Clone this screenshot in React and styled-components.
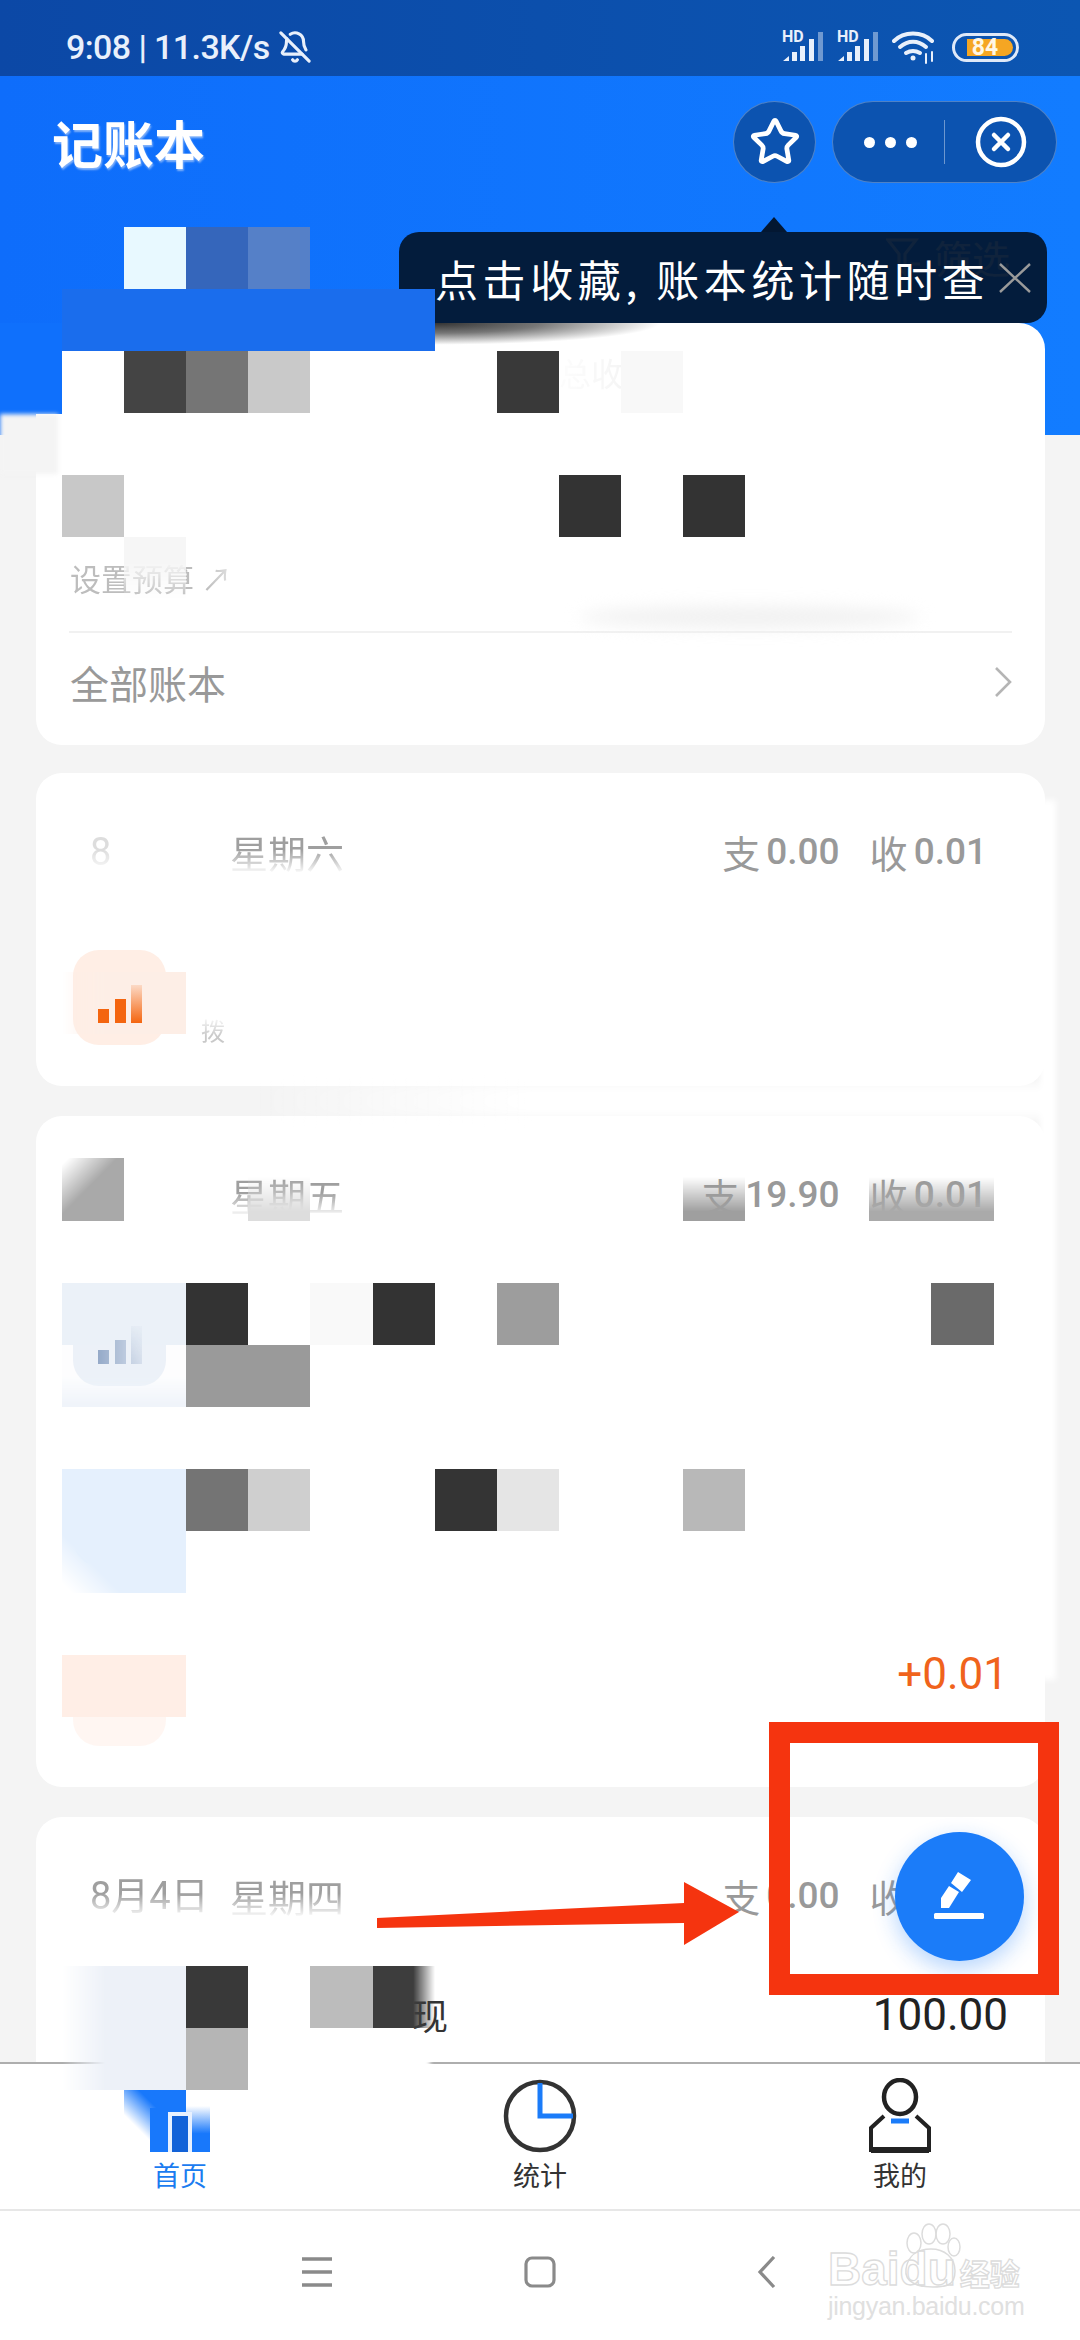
import React from "react";
import styled, { createGlobalStyle } from "styled-components";
import { Star, BellOff } from "lucide-react";

const CJK = `"Noto Sans CJK SC", "Noto Sans", sans-serif`;
const NUM = `Roboto, "Noto Sans CJK SC", sans-serif`;

const Global = createGlobalStyle`
  html, body { margin: 0; padding: 0; background: #f4f4f4; }
  * { box-sizing: border-box; }
`;

const Screen = styled.div`
  position: relative;
  width: 1080px;
  height: 2340px;
  overflow: hidden;
  display: flex;
  flex-direction: column;
  background: #f4f4f4;
  font-family: ${CJK};
`;

/* status bar */
const StatusBar = styled.div`
  height: 76px;
  flex: none;
  display: flex;
  align-items: center;
  justify-content: space-between;
  padding: 18px 61px 0 66px;
  background: linear-gradient(90deg, #0c48a6, #0c56b2);
  color: #e9f0fb;
`;
const StatusLeft = styled.div`
  display: flex;
  align-items: center;
  gap: 8px;
  font: 500 34px/40px ${NUM};
  letter-spacing: -0.6px;
`;
const StatusRight = styled.div`
  display: flex;
  align-items: center;
  gap: 13px;
`;
const NetworkGroup = styled.div`
  width: 42px;
  height: 32px;
  display: flex;
  flex-direction: column;
  position: relative;
`;
const NetworkLabel = styled.span`
  position: absolute;
  left: 0;
  top: -3px;
  font: 700 16px/18px Roboto, sans-serif;
  color: #e9f0fb;
`;
const Battery = styled.div`
  width: 67px;
  height: 29px;
  margin-left: 3px;
  border: 3px solid #dfe9f8;
  border-radius: 15px;
  padding: 3px 3px 3px 12px;
  display: flex;
`;
const BatteryFill = styled.div`
  flex: 1;
  background: #f5a623;
  border-radius: 0 9px 9px 0;
  color: #fff7e6;
  font: 700 23px/18px ${NUM};
  text-align: center;
  padding-right: 10px;
`;

/* blue header */
const Hero = styled.header`
  position: relative;
  height: 359px;
  flex: none;
  background: linear-gradient(90deg, #0e6dfb, #127cff);
  color: #fff;
`;
const TopBar = styled.div`
  display: flex;
  align-items: center;
  justify-content: space-between;
  padding: 25px 23px 0 52px;
`;
const Title = styled.h1`
  margin: 0;
  font: 700 51px/60px ${CJK};
  text-shadow: 1px 2px 2px rgba(210, 225, 250, 0.6);
`;
const Actions = styled.div`
  display: flex;
  gap: 16px;
`;
const RoundButton = styled.button`
  width: 83px;
  height: 82px;
  border-radius: 50%;
  border: 1px solid rgba(255, 255, 255, 0.28);
  background: #0c53b0;
  color: #fff;
  padding: 0;
  display: flex;
  align-items: center;
  justify-content: center;
`;
const Capsule = styled.div`
  width: 225px;
  height: 82px;
  border-radius: 41px;
  border: 1px solid rgba(255, 255, 255, 0.28);
  background: #0c53b0;
  display: flex;
  align-items: center;
`;
const Dots = styled.div`
  width: 111px;
  padding-left: 31px;
  display: flex;
  gap: 10px;
`;
const Dot = styled.span`
  width: 11px;
  height: 11px;
  border-radius: 50%;
  background: #fff;
`;
const CapsuleDivider = styled.span`
  width: 1px;
  height: 44px;
  background: rgba(255, 255, 255, 0.4);
`;
const CapsuleClose = styled.div`
  flex: 1;
  display: flex;
  justify-content: center;
`;
const FilterRow = styled.div`
  display: flex;
  justify-content: flex-end;
  align-items: center;
  gap: 12px;
  padding: 52px 70px 0 0;
  font: 400 38px/44px ${CJK};
  color: #fff;
`;
const Tooltip = styled.div`
  position: absolute;
  left: 399px;
  top: 156px;
  width: 648px;
  height: 91px;
  border-radius: 20px;
  background: rgba(3, 23, 50, 0.95);
  display: flex;
  align-items: center;
  justify-content: space-between;
  padding: 0 15px 0 36px;
  color: #fff;
  font: 400 43px/50px ${CJK};
  letter-spacing: 4.6px;
  z-index: 3;
  &::before {
    content: "";
    position: absolute;
    left: 362px;
    top: -15px;
    border-left: 13px solid transparent;
    border-right: 13px solid transparent;
    border-bottom: 15px solid #031732;
  }
`;

/* scrolling list of cards */
const Content = styled.main`
  position: relative;
  flex: 1;
  min-height: 0;
  overflow: hidden;
  margin-top: -112px;
  padding: 0 35px 0 36px;
  display: flex;
  flex-direction: column;
  gap: 30px;
`;
const Card = styled.section`
  flex: none;
  background: #fff;
  border-radius: 26px;
  margin-top: ${(p) => p.$pull || 0}px;
  padding-bottom: ${(p) => p.$bottom || 0}px;
`;
const SummaryHint = styled.div`
  padding: 29px 0 0 523px;
  height: 233px;
  font: 400 32px/40px ${CJK};
  color: #e6e6e6;
  -webkit-mask-image: linear-gradient(to right, transparent 50%, #000 70%);
  mask-image: linear-gradient(to right, transparent 50%, #000 70%);
`;
const BudgetLink = styled.div`
  padding-left: 34px;
  height: 44px;
  font: 400 31px/44px ${CJK};
  color: #bdbdbd;
  -webkit-mask-image: linear-gradient(to right, #000 170px, transparent 215px);
  mask-image: linear-gradient(to right, #000 170px, transparent 215px);
`;
const CardDivider = styled.hr`
  margin: 31px 33px 0;
  height: 2px;
  border: 0;
  background: #f1f1f1;
`;
const AllBooks = styled.div`
  height: 112px;
  padding: 0 33px 14px 34px;
  display: flex;
  align-items: center;
  justify-content: space-between;
  font: 400 39px/48px ${CJK};
  color: #999;
`;
const DayHeader = styled.div`
  margin-top: 57px;
  height: 44px;
  padding: 0 58px 0 54px;
  display: flex;
  align-items: center;
  justify-content: space-between;
`;
const DayLabel = styled.div`
  display: flex;
  gap: 20px;
  font: 400 38px/44px ${CJK};
  color: #9f9f9f;
  -webkit-mask-image: linear-gradient(to bottom, #000 45%, transparent 100%);
  mask-image: linear-gradient(to bottom, #000 45%, transparent 100%);
`;
const DayDate = styled.span`
  min-width: 120px;
  font-family: ${NUM};
  opacity: ${(p) => (p.$ghost ? 0.35 : 1)};
`;
const Totals = styled.div`
  display: flex;
  gap: 30px;
  color: #999;
`;
const Total = styled.span`
  display: flex;
  align-items: center;
  gap: 6px;
  font: 400 38px/44px ${CJK};
`;
const TotalValue = styled.b`
  font: 500 37px/44px ${NUM};
`;
const Row = styled.div`
  margin-top: ${(p) => p.$gap}px;
  padding: 0 37px;
  height: 95px;
  display: flex;
  align-items: flex-start;
`;
const IconTile = styled.div`
  flex: none;
  width: 93px;
  height: 95px;
  border-radius: 26px;
  background: ${(p) => p.$bg};
  display: flex;
  align-items: center;
  justify-content: center;
  padding-top: 12px;
`;
const RowText = styled.div`
  flex: 1;
  height: 95px;
  padding-left: ${(p) => p.$indent || 35}px;
  display: flex;
  flex-direction: ${(p) => (p.$bottom ? "column-reverse" : "column")};
`;
const RowName = styled.span`
  font: 400 36px/44px ${CJK};
  color: #333;
`;
const RowNote = styled.span`
  font: 400 24px/30px ${CJK};
  color: #c9c9c9;
  -webkit-mask-image: linear-gradient(to top, #000 30%, transparent);
  mask-image: linear-gradient(to top, #000 30%, transparent);
`;
const Amount = styled.span`
  font: 400 44px/46px ${NUM};
  color: ${(p) => p.$color};
`;

/* bottom tabs */
const TabBar = styled.nav`
  flex: none;
  height: 149px;
  background: #fff;
  border-top: 2px solid #aeaeae;
  border-bottom: 2px solid #e7e7e7;
  display: grid;
  grid-template-columns: repeat(3, 360px);
`;
const Tab = styled.div`
  display: flex;
  flex-direction: column;
  align-items: center;
  justify-content: flex-end;
  padding-bottom: 18px;
  gap: 5px;
  font: 400 27px/32px ${CJK};
  color: ${(p) => (p.$active ? "#1b7cf0" : "#333")};
`;
const TabIcon = styled.svg`
  position: relative;
  z-index: 5;
  display: block;
  width: 80px;
  height: 76px;
`;
const BarsIcon = styled.svg`
  position: relative;
  z-index: 5;
  ${(p) =>
    p.$washed &&
    `-webkit-mask-image: linear-gradient(to right, #000, rgba(0,0,0,.25));
     mask-image: linear-gradient(to right, #000, rgba(0,0,0,.25));`}
`;

/* system navigation */
const NavBar = styled.div`
  position: relative;
  flex: none;
  height: 129px;
  background: #fff;
  display: grid;
  grid-template-columns: 249px 136px 310px 144px;
  justify-content: start;
  align-items: center;
`;
const NavSlot = styled.div`
  grid-column: ${(p) => p.$col};
  display: flex;
  justify-content: center;
  padding-bottom: 7px;
`;
const Watermark = styled.div`
  position: absolute;
  left: 828px;
  top: 12px;
  width: 200px;
  height: 96px;
`;
const MarkLine = styled.div`
  position: absolute;
  left: 0;
  top: 26px;
  height: 40px;
  display: flex;
  align-items: baseline;
  font: 700 46px/40px "Liberation Sans", sans-serif;
  color: transparent;
  -webkit-text-stroke: 1.3px #dcdcdc;
`;
const MarkCjk = styled.span`
  font: 700 30px/40px ${CJK};
  margin-left: 4px;
`;
const MarkUrl = styled.div`
  position: absolute;
  left: 0;
  top: 69px;
  font: 400 25px/28px "Liberation Sans", sans-serif;
  letter-spacing: -0.3px;
  color: #e0e0e0;
`;

/* overlay layers */
const Patch = styled.div`
  position: absolute;
  left: ${(p) => p.$x}px;
  top: ${(p) => p.$y}px;
  width: ${(p) => p.$w}px;
  height: ${(p) => p.$h}px;
  background: ${(p) => p.$bg};
  filter: ${(p) => (p.$blur ? `blur(${p.$blur}px)` : "none")};
  border-radius: ${(p) => p.$round || 0};
  z-index: 4;
`;
const Mosaic = styled.div`
  position: absolute;
  left: 0;
  top: 227px;
  display: grid;
  grid-template-columns: repeat(18, 62.1px);
  grid-template-rows: repeat(31, 62.1px);
  z-index: 4;
  pointer-events: none;
`;
const Cell = styled.div`
  grid-row: ${(p) => p.$r + 1} / span ${(p) => p.$rs || 1};
  grid-column: ${(p) => p.$c + 1} / span ${(p) => p.$cs || 1};
  background: ${(p) => p.$bg};
  ${(p) => p.$mask && `-webkit-mask-image: ${p.$mask}; mask-image: ${p.$mask};`}
`;
const Fab = styled.button`
  position: absolute;
  left: 895px;
  top: 1832px;
  width: 129px;
  height: 129px;
  padding: 0;
  border: 0;
  border-radius: 50%;
  background: #1b7cf9;
  box-shadow: 0 8px 22px rgba(27, 124, 249, 0.32);
  z-index: 6;
  display: flex;
  align-items: center;
  justify-content: center;
`;
const RedBox = styled.div`
  position: absolute;
  left: 769px;
  top: 1722px;
  width: 290px;
  height: 273px;
  border: 21px solid #f5340f;
  z-index: 7;
`;
const ArrowMark = styled.svg`
  position: absolute;
  left: 370px;
  top: 1875px;
  z-index: 7;
`;
const PawMark = styled.svg`
  position: absolute;
  left: 0;
  top: 0;
`;

/* drawn icons */
const Signal = () => (
  <NetworkGroup>
    <NetworkLabel>HD</NetworkLabel>
    <svg width="42" height="32" viewBox="0 0 42 32">
      <path d="M1 30l6-5v5zM10 21h5v9h-5zM18 15h5v15h-5zM27 8h5v22h-5z" fill="#e9f0fb" />
      <rect x="36" y="1" width="5" height="29" fill="#e9f0fb" opacity=".45" />
    </svg>
  </NetworkGroup>
);
const Wifi = () => (
  <svg width="44" height="34" viewBox="0 0 44 34" fill="none" stroke="#e9f0fb" strokeWidth="4" strokeLinecap="round">
    <path d="M2 11C12 1 30 1 40 11" />
    <path d="M8 17c8-7 18-7 26 0" />
    <path d="M14 23c5-3 9-3 14 0" />
    <circle cx="21" cy="28" r="2.5" fill="#e9f0fb" stroke="none" />
    <path d="M34 24v9M40 22v9" strokeWidth="2" />
  </svg>
);
const CircleClose = () => (
  <svg width="52" height="52" viewBox="0 0 52 52" fill="none" stroke="#fff" strokeLinecap="round">
    <circle cx="26" cy="26" r="23" strokeWidth="4.5" />
    <path d="M19 19l14 14M33 19L19 33" strokeWidth="4.5" />
  </svg>
);
const FilterGlyph = () => (
  <svg width="36" height="38" viewBox="0 0 36 38" fill="none" stroke="#fff" strokeWidth="3">
    <path d="M2 2h28L19 16v20l-6-6V16z" />
    <path d="M24 26h10" />
  </svg>
);
const TooltipClose = () => (
  <svg width="34" height="30" viewBox="0 0 34 30" stroke="#9a9a9a" strokeWidth="2.4">
    <path d="M2 1l30 28M32 1L2 29" />
  </svg>
);
const Chevron = () => (
  <svg width="18" height="32" viewBox="0 0 18 32" fill="none" stroke="#b5b5b5" strokeWidth="2.6">
    <path d="M2 2l14 14L2 30" />
  </svg>
);
const Bars = ({ tone, id, washed }) => (
  <BarsIcon $washed={washed} width="44" height="38" viewBox="0 0 44 38">
    <defs>
      <linearGradient id={id} x1="0" y1="1" x2="0" y2="0">
        <stop offset="0" stopColor={tone} />
        <stop offset="1" stopColor={tone} stopOpacity=".15" />
      </linearGradient>
    </defs>
    <rect x="0" y="24" width="11" height="14" fill={tone} />
    <rect x="17" y="14" width="11" height="24" fill={tone} />
    <rect x="33" y="0" width="11" height="38" fill={`url(#${id})`} />
  </BarsIcon>
);
const HomeIcon = () => (
  <TabIcon viewBox="0 0 80 76">
    <defs>
      <linearGradient id="home-fade" x1="0" y1="0" x2="0" y2="1">
        <stop offset="0" stopColor="#1878fb" stopOpacity="0" />
        <stop offset=".6" stopColor="#1878fb" />
      </linearGradient>
    </defs>
    <rect x="10" y="30" width="36" height="44" fill="#1878fb" />
    <rect x="46" y="28" width="24" height="46" fill="url(#home-fade)" />
    <path d="M30 74V36h20v38" fill="#1262d8" stroke="#e8f1ff" strokeWidth="4" />
  </TabIcon>
);
const ChartIcon = () => (
  <TabIcon viewBox="0 0 80 76" fill="none">
    <circle cx="40" cy="38" r="34" stroke="#333" strokeWidth="4.5" />
    <path d="M40 5v33h33" stroke="#1b7cf9" strokeWidth="5" />
  </TabIcon>
);
const UserIcon = () => (
  <TabIcon viewBox="0 0 80 76" fill="none">
    <ellipse cx="40" cy="19" rx="16" ry="17" stroke="#222" strokeWidth="4.5" />
    <path d="M24 38l-13 12v22h58V50L56 38" stroke="#222" strokeWidth="4" />
    <path d="M11 72h58" stroke="#222" strokeWidth="6" />
    <path d="M31 43h18" stroke="#1b7cf9" strokeWidth="5" />
  </TabIcon>
);
const MenuGlyph = () => (
  <svg width="32" height="32" viewBox="0 0 32 32" stroke="#8a8a8a" strokeWidth="3.4">
    <path d="M1 3h30M1 16h30M1 29h30" />
  </svg>
);
const SquareGlyph = () => (
  <svg width="32" height="32" viewBox="0 0 32 32" fill="none" stroke="#8a8a8a" strokeWidth="3.2">
    <rect x="2" y="2" width="28" height="28" rx="6" />
  </svg>
);
const BackGlyph = () => (
  <svg width="20" height="32" viewBox="0 0 20 32" fill="none" stroke="#8a8a8a" strokeWidth="3.2">
    <path d="M17 1L3 16l14 15" />
  </svg>
);
const Paw = () => (
  <PawMark width="200" height="70" viewBox="0 0 200 70" fill="none" stroke="#dcdcdc" strokeWidth="1.5">
    <ellipse cx="86" cy="20" rx="7" ry="10" />
    <ellipse cx="101" cy="11" rx="7" ry="10" />
    <ellipse cx="115" cy="11" rx="7" ry="10" />
    <ellipse cx="126" cy="24" rx="6" ry="9" />
    <path d="M78 46c2-14 12-20 25-20s24 8 24 22-8 16-22 16-29-4-27-18z" />
  </PawMark>
);
const Pen = () => (
  <svg width="56" height="52" viewBox="0 0 56 52" fill="#fff">
    <path d="M8 37V27l8-12 10 6-10 16zM18 12l7-11 13 8-9 12z" transform="translate(1 0)" />
    <rect x="2" y="42" width="50" height="6" rx="1.5" />
  </svg>
);

const fadeLeft = "linear-gradient(to right, transparent, #000 35%)";
const fadeRight = "linear-gradient(to right, #000 65%, transparent)";
const riseUp = "linear-gradient(to bottom, transparent 30%, #000 85%)";
const cornerSoft = "linear-gradient(to top right, transparent 4%, #000 24%)";

// Pixelated redaction blocks: [row, column, colour, column span, row span, mask]
const blocks = [
  [0, 2, "#e8f9ff"], [0, 3, "#3566bb"], [0, 4, "#5580c8"],
  [1, 1, "#1a6ded", 6],
  [2, 1, "#fff"], [2, 2, "#444"], [2, 3, "#757575"], [2, 4, "#c9c9c9"], [2, 8, "#393939"], [2, 10, "#f8f8f8"],
  [4, 1, "#c8c8c8"], [4, 9, "#333"], [4, 11, "#333"],
  [5, 2, "#f6f6f6", 1, 1, "linear-gradient(to bottom, #000 40%, transparent)"],
  [12, 1, "#fdeee6", 2, 1, fadeLeft],
  [15, 1, "#a9a9a9", 1, 1, "linear-gradient(to bottom right, transparent 5%, #000 45%)"],
  [15, 4, "#ddd", 1, 1, riseUp], [15, 11, "#9f9f9f", 1, 1, riseUp], [15, 14, "#aaa", 2, 1, riseUp],
  [17, 1, "#ebf1f8", 2], [17, 3, "#333"], [17, 5, "#f9f9f9"], [17, 6, "#333"], [17, 8, "#9d9d9d"], [17, 15, "#6a6a6a"],
  [18, 1, "#f0f4fa", 2, 1, "linear-gradient(to bottom, rgba(0,0,0,.15) 50%, #000 95%)"], [18, 3, "#9a9a9a", 2],
  [20, 1, "#e5f0fd", 2, 2, cornerSoft], [20, 3, "#747474"], [20, 4, "#cfcfcf"], [20, 7, "#343434"], [20, 8, "#e5e5e5"], [20, 11, "#b8b8b8"],
  [23, 1, "#ffeee6", 2],
  [28, 1, "#edf1f8", 2, 2, fadeLeft], [28, 3, "#393939"], [28, 5, "#bcbcbc"], [28, 6, "#3d3d3d", 1, 1, fadeRight],
  [29, 3, "#b5b5b5"],
  [30, 2, "#1878fb", 1, 1, "linear-gradient(to top right, transparent 30%, #000 62%)"],
];

const Day = ({ date, ghost, week, out, inc }) => (
  <DayHeader>
    <DayLabel>
      <DayDate $ghost={ghost}>{date}</DayDate>
      <span>{week}</span>
    </DayLabel>
    <Totals>
      <Total>支<TotalValue>{out}</TotalValue></Total>
      <Total>收<TotalValue>{inc}</TotalValue></Total>
    </Totals>
  </DayHeader>
);

export default function App() {
  return (
    <Screen>
      <Global />
      <StatusBar>
        <StatusLeft>
          <span>9:08 | 11.3K/s</span>
          <BellOff size={34} strokeWidth={2.2} />
        </StatusLeft>
        <StatusRight>
          <Signal />
          <Signal />
          <Wifi />
          <Battery><BatteryFill>84</BatteryFill></Battery>
        </StatusRight>
      </StatusBar>

      <Hero>
        <TopBar>
          <Title>记账本</Title>
          <Actions>
            <RoundButton><Star size={52} strokeWidth={2.2} /></RoundButton>
            <Capsule>
              <Dots><Dot /><Dot /><Dot /></Dots>
              <CapsuleDivider />
              <CapsuleClose><CircleClose /></CapsuleClose>
            </Capsule>
          </Actions>
        </TopBar>
        <FilterRow><FilterGlyph /><span>筛选</span></FilterRow>
        <Tooltip>
          <span>点击收藏, 账本统计随时查</span>
          <TooltipClose />
        </Tooltip>
      </Hero>

      <Content>
        <Card $pull={0}>
          <SummaryHint>总收入 〉</SummaryHint>
          <BudgetLink>设置预算 ↗</BudgetLink>
          <CardDivider />
          <AllBooks><span>全部账本</span><Chevron /></AllBooks>
        </Card>

        <Card $pull={-2} $bottom={41}>
          <Day date="8" ghost week="星期六" out="0.00" inc="0.01" />
          <Row $gap={76}>
            <IconTile $bg="#ffeee5"><Bars tone="#f4650f" id="bars-income" /></IconTile>
            <RowText $bottom><RowNote>拨</RowNote></RowText>
          </Row>
        </Card>

        <Card $bottom={41}>
          <Day date="" week="星期五" out="19.90" inc="0.01" />
          <Row $gap={74}>
            <IconTile $bg="#ebf1f8"><Bars tone="#94a9c8" id="bars-expense" washed /></IconTile>
          </Row>
          <Row $gap={85}>
            <IconTile $bg="#e5f0fd" />
          </Row>
          <Row $gap={85}>
            <IconTile $bg="linear-gradient(#fff 6px, #fff6f2 6px)" />
            <RowText />
            <Amount $color="#f0631c">+0.01</Amount>
          </Row>
        </Card>

        <Card $bottom={41}>
          <Day date="8月4日" week="星期四" out="0.00" inc="0.01" />
          <Row $gap={74}>
            <IconTile $bg="transparent" />
            <RowText $indent={246}><RowName>现</RowName></RowText>
            <Amount $color="#222">100.00</Amount>
          </Row>
        </Card>
      </Content>

      <TabBar>
        <Tab $active><HomeIcon />首页</Tab>
        <Tab><ChartIcon />统计</Tab>
        <Tab><UserIcon />我的</Tab>
      </TabBar>

      <NavBar>
        <NavSlot $col={2}><MenuGlyph /></NavSlot>
        <NavSlot $col={3}><SquareGlyph /></NavSlot>
        <NavSlot $col={4}><BackGlyph /></NavSlot>
        <Watermark>
          <Paw />
          <MarkLine>Bai<span>du</span><MarkCjk>经验</MarkCjk></MarkLine>
          <MarkUrl>jingyan.baidu.com</MarkUrl>
        </Watermark>
      </NavBar>

      {/* retouched areas lying over the list */}
      <Patch $x={0} $y={323} $w={62} $h={91} $bg="#0f70fc" />
      <Patch $x={0} $y={414} $w={58} $h={60} $bg="#f4f4f4" $blur={2} />
      <Patch $x={435} $y={323} $w={300} $h={29} $bg="radial-gradient(ellipse 100% 100% at 0% 0%, #333 0%, #777 35%, rgba(255,255,255,0) 75%)" />
      <Patch $x={580} $y={606} $w={340} $h={22} $bg="#f1f1f1" $blur={8} $round="50%" />
      <Patch $x={1040} $y={800} $w={16} $h={880} $bg="#fff" $blur={3} />
      <Patch $x={250} $y={1084} $w={800} $h={34} $bg="linear-gradient(to right, rgba(255,255,255,0), #fff 35%)" $blur={6} />
      <Patch $x={130} $y={2056} $w={300} $h={14} $bg="#fff" $blur={2} />

      <Mosaic>
        {blocks.map(([r, c, bg, cs, rs, mask], i) => (
          <Cell key={i} $r={r} $c={c} $bg={bg} $cs={cs} $rs={rs} $mask={mask} />
        ))}
      </Mosaic>

      <Fab><Pen /></Fab>
      <RedBox />
      <ArrowMark width="372" height="76" viewBox="0 0 372 76">
        <path d="M7 43L314 28V7l55 30-55 33V48L7 53z" fill="#f5340f" />
      </ArrowMark>
    </Screen>
  );
}
